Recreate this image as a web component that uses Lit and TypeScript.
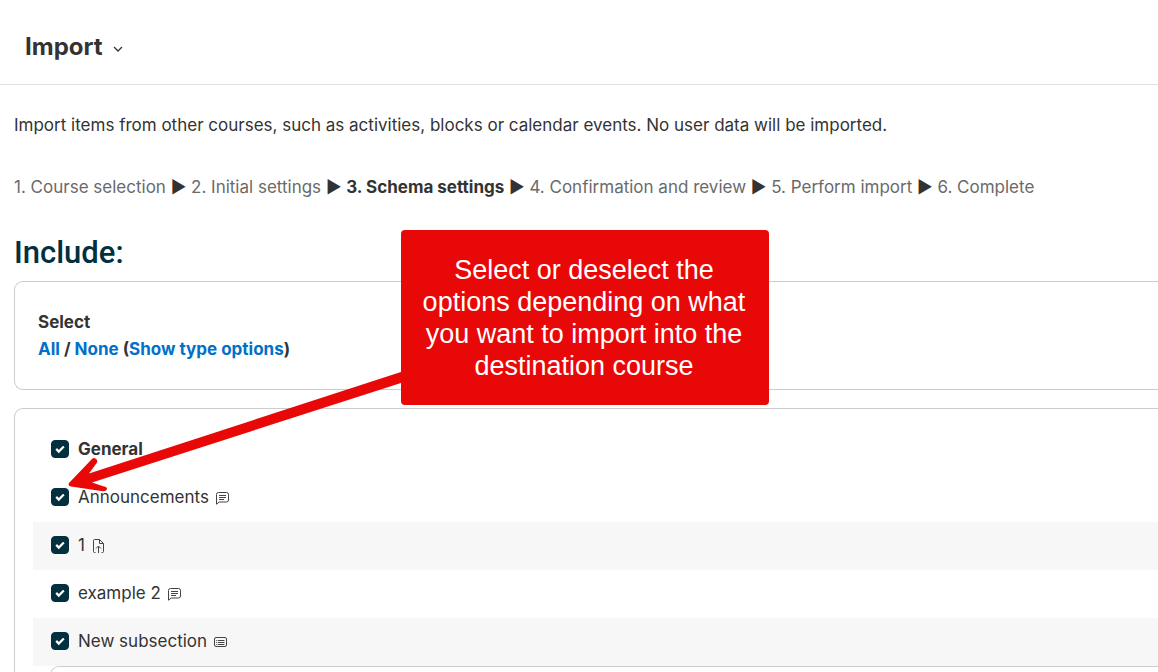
import { LitElement, html, css, svg } from "lit";
import { customElement } from "lit/decorators.js";
import { classMap } from "lit/directives/class-map.js";

type Icon = "forum" | "file" | "subsection";

interface Item {
  id: string;
  label: string;
  icon?: Icon;
  striped?: boolean;
}

const STEPS = [
  "1. Course selection",
  "2. Initial settings",
  "3. Schema settings",
  "4. Confirmation and review",
  "5. Perform import",
  "6. Complete",
];
const CURRENT_STEP = 2;

const ITEMS: Item[] = [
  { id: "general", label: "General" },
  { id: "announcements", label: "Announcements", icon: "forum" },
  { id: "one", label: "1", icon: "file", striped: true },
  { id: "example", label: "example 2", icon: "forum" },
  { id: "subsection", label: "New subsection", icon: "subsection", striped: true },
];

const ICONS = {
  forum: svg`<path d="M1.500 13.200V3.500a2 2 0 0 1 2-2h8a2 2 0 0 1 2 2v5.500a2 2 0 0 1-2 2H4.200z"/><path d="M4 4.500h7M4 6.500h7M4 8.500h5"/>`,
  file: svg`<path d="M4.500 13.500H3.500a1 1 0 0 1-1-1v-11a1 1 0 0 1 1-1H8.500l4 4v8a1 1 0 0 1-1 1H10.500M8.500 .500V4.500h4M7.500 14V7.500M5 9.500l2.500-2.500 2.500 2.500"/>`,
  subsection: svg`<rect x="1.500" y="2.500" width="12" height="9" rx="1.500"/><path d="M5 5.500h6.500M5 7.500h6.500M5 9.500h6.500M3.200 5.500h1M3.200 7.500h1M3.200 9.500h1"/>`,
};

@customElement("app-root")
export class AppRoot extends LitElement {
  static styles = css`
    :host {
      display: block;
      position: relative;
      height: 100vh;
      overflow: hidden;
      background: #fff;
      color: #333;
      font: 17px/27px Inter, "Liberation Sans", sans-serif;
    }
    .header {
      box-sizing: border-box;
      display: flex;
      align-items: center;
      height: 85px;
      padding: 10px 0 0 25px;
      border-bottom: 1px solid #dee2e6;
    }
    .menu {
      display: flex;
      align-items: center;
      gap: 10px;
      padding: 0;
      border: 0;
      background: none;
      color: inherit;
      font: 700 24px/30px Inter, "Liberation Sans", sans-serif;
    }
    .chevron {
      width: 10px;
      height: 10px;
      margin-top: 4px;
      fill: none;
      stroke: #333;
      stroke-width: 1.3;
    }
    .main {
      padding: 27px 0 0 14px;
    }
    .intro {
      margin: 0 0 35px;
    }
    .steps {
      margin: 0;
      color: #6a6a6a;
    }
    .current,
    .arrow {
      color: #333;
    }
    .current {
      font-weight: 700;
    }
    .title {
      margin: 34px 0 10px;
      color: #03303f;
      font: 500 31px/36px Roboto, sans-serif;
    }
    .panel {
      margin-bottom: 18px;
      border: 1px solid #ccc;
      border-right: 0;
      border-radius: 9px 0 0 9px;
    }
    .select {
      padding: 27px 23px 26px;
      font-weight: 700;
    }
    .link {
      color: #0070c9;
      text-decoration: none;
    }
    .items {
      padding: 17px 0 0 18px;
    }
    .row {
      box-sizing: border-box;
      display: flex;
      align-items: center;
      height: 48px;
      padding: 0 0 2px 18px;
    }
    .striped {
      background: #f7f7f7;
    }
    .strong {
      font-weight: 700;
    }
    .check {
      appearance: none;
      width: 18px;
      height: 18px;
      margin: 0 9px 0 0;
      border-radius: 4px;
      border: 1px solid #03303f;
      background: #fff;
    }
    .check:checked {
      background: #03303f
        url("data:image/svg+xml,%3Csvg xmlns='http://www.w3.org/2000/svg' viewBox='0 0 16 16'%3E%3Cpath d='M4.200 7.900l2.600 2.600 5-5' fill='none' stroke='%23fff' stroke-width='2.300'/%3E%3C/svg%3E")
        center / 16px no-repeat;
    }
    .icon {
      width: 15px;
      height: 15px;
      margin: 2px 0 0 6px;
      fill: none;
      stroke: #444;
      stroke-width: 1;
    }
    .nested {
      height: 60px;
      margin-left: 17px;
    }
    .callout {
      position: absolute;
      left: 401px;
      top: 230px;
      box-sizing: border-box;
      width: 368px;
      padding: 24px 16px 23px 14px;
      border-radius: 4px;
      background: #e90808;
      color: #fff;
      font: 27px/32px "Liberation Sans", Arial, sans-serif;
      text-align: center;
    }
    .pointer {
      position: absolute;
      left: 60px;
      top: 360px;
      width: 350px;
      height: 140px;
      fill: #e90808;
      pointer-events: none;
    }
  `;

  render() {
    return html`
      <header class="header">
        <button class="menu" type="button">
          Import
          <svg class="chevron" viewBox="0 0 10 10" aria-hidden="true"><path d="M1 3l4 4 4-4" /></svg>
        </button>
      </header>
      <main class="main">
        <p class="intro">Import items from other courses, such as activities, blocks or calendar events. No user data will be imported.</p>
        <p class="steps">
          ${STEPS.map(
            (step, i) => html`${i ? html` <span class="arrow">►</span> ` : ""}<span class=${classMap({ current: i === CURRENT_STEP })}>${step}</span>`
          )}
        </p>
        <h2 class="title">Include:</h2>
        <section class="panel select">
          <div>Select</div>
          <div>
            <a class="link" href="#">All</a> / <a class="link" href="#">None</a> (<a class="link" href="#">Show type options</a>)
          </div>
        </section>
        <section class="panel items">
          ${ITEMS.map(
            (item) => html`
              <div class=${classMap({ row: true, striped: !!item.striped, strong: item.id === "general" })}>
                <input class="check" type="checkbox" id=${item.id} checked />
                <label for=${item.id}>${item.label}</label>
                ${item.icon ? html`<svg class="icon" viewBox="0 0 15 15" aria-hidden="true">${ICONS[item.icon]}</svg>` : ""}
              </div>
            `
          )}
          <div class="panel nested"></div>
        </section>
      </main>
      <svg class="pointer" viewBox="60 360 350 140" aria-hidden="true">
        <path d="M404 371 L89 473.500 L97 462.500 Q98 459 94.500 458 Q92 458 91 460 L69 483 Q67.500 486 71 486.500 L103 491.200 Q107 491 107 488.500 Q106.500 486.500 104 486.500 L92 482.500 L404 382 Z" />
      </svg>
      <aside class="callout">Select or deselect the options depending on what you want to import into the destination course</aside>
    `;
  }
}
